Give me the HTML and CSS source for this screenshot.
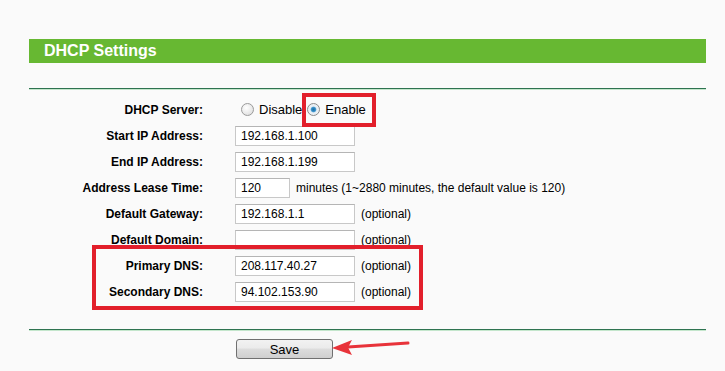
FILE: index.html
```html
<!DOCTYPE html>
<html>
<head>
<meta charset="utf-8">
<link rel="stylesheet" href="styles.css">
</head>
<body>
<div class="page">
  <div class="title-bar">DHCP Settings</div>
  <div class="rule"></div>
  <div class="form">
    <div class="row row-first">
      <label class="lbl">DHCP Server:</label>
      <div class="field">
        <span class="radio"></span><span class="rtext">Disable</span>
        <span class="radio checked"></span><span class="rtext">Enable</span>
      </div>
    </div>
    <div class="row">
      <label class="lbl">Start IP Address:</label>
      <div class="field"><span class="input">192.168.1.100</span></div>
    </div>
    <div class="row">
      <label class="lbl">End IP Address:</label>
      <div class="field"><span class="input">192.168.1.199</span></div>
    </div>
    <div class="row">
      <label class="lbl">Address Lease Time:</label>
      <div class="field"><span class="input short">120</span><span class="note">minutes (1~2880 minutes, the default value is 120)</span></div>
    </div>
    <div class="row">
      <label class="lbl">Default Gateway:</label>
      <div class="field"><span class="input">192.168.1.1</span><span class="note">(optional)</span></div>
    </div>
    <div class="row">
      <label class="lbl">Default Domain:</label>
      <div class="field"><span class="input"></span><span class="note">(optional)</span></div>
    </div>
    <div class="row">
      <label class="lbl">Primary DNS:</label>
      <div class="field"><span class="input">208.117.40.27</span><span class="note">(optional)</span></div>
    </div>
    <div class="row">
      <label class="lbl">Secondary DNS:</label>
      <div class="field"><span class="input">94.102.153.90</span><span class="note">(optional)</span></div>
    </div>
  </div>
  <div class="rule rule-bottom"></div>
  <div class="actions">
    <button class="save">Save</button>
  </div>
  <div class="mark mark-enable"></div>
  <div class="mark mark-dns"></div>
  <svg class="arrow" width="80" height="20" viewBox="0 0 80 20">
    <path d="M78 5 L18 9" stroke="#e8333a" stroke-width="3" fill="none" stroke-linecap="round"/>
    <path d="M2 10 L22 2 L18 9.5 L22 17 Z" fill="#e8333a"/>
  </svg>
</div>
</body>
</html>
```
FILE: styles.css
```css
html, body {
  margin: 0;
  padding: 0;
  background: #fafafa;
}
body {
  font-family: "Liberation Sans", Arial, sans-serif;
  font-size: 12px;
  color: #000;
}
.page {
  position: relative;
  width: 677px;
  margin-left: 29px;
  padding-top: 39px;
}
.title-bar {
  height: 24px;
  line-height: 24px;
  background: #67b832;
  color: #fff;
  font-weight: bold;
  font-size: 16px;
  padding-left: 15px;
}
.rule {
  margin-top: 25px;
  height: 1px;
  background: #2e7350;
  border-bottom: 1px solid #c4e6cc;
}
.form {
  padding-top: 6px;
}
.row {
  display: grid;
  grid-template-columns: 174px 1fr;
  column-gap: 32px;
  align-items: center;
  height: 26px;
}
.row-first {
  height: 27px;
}
.lbl {
  text-align: right;
  font-weight: bold;
}
.field {
  display: flex;
  align-items: center;
}
.input {
  box-sizing: border-box;
  display: inline-block;
  width: 120px;
  height: 20px;
  line-height: 18px;
  border: 1px solid #c8c8c8;
  border-top-color: #b5b5b5;
  background: #fff;
  padding-left: 5px;
  font-size: 12px;
}
.input.short {
  width: 55px;
}
.note {
  margin-left: 6px;
}
.radio {
  box-sizing: border-box;
  width: 13px;
  height: 13px;
  border-radius: 50%;
  border: 1px solid #9a9a9a;
  background: radial-gradient(circle at 40% 35%, #ffffff 0%, #e4e4e4 70%, #d0d0d0 100%);
  margin-left: 6px;
  margin-right: 5px;
}
.radio.checked {
  margin-left: 5px;
  margin-right: 5px;
  background: radial-gradient(circle, #1f6fa3 0%, #2d87c0 22%, #4a9bd0 30%, #e6eef4 42%, #f4f4f4 100%);
  border-color: #8a8a8a;
}
.rtext {
  font-size: 13px;
}
.rule-bottom {
  margin-top: 24px;
}
.actions {
  padding-top: 8px;
  padding-left: 207px;
}
.save {
  box-sizing: border-box;
  width: 97px;
  height: 20px;
  border: 1px solid #707070;
  border-radius: 3px;
  background: linear-gradient(#f2f2f2 0%, #ebebeb 45%, #dddddd 50%, #cfcfcf 100%);
  font-family: "Liberation Sans", Arial, sans-serif;
  font-size: 13px;
  padding: 0;
  line-height: 17px;
  color: #000;
}
.mark {
  position: absolute;
  border: 4px solid #e21f2b;
  box-sizing: border-box;
}
.mark-enable {
  left: 273px;
  top: 93px;
  width: 74px;
  height: 34px;
}
.mark-dns {
  left: 63px;
  top: 245px;
  width: 331px;
  height: 65px;
}
.arrow {
  position: absolute;
  left: 301px;
  top: 338px;
}
```
